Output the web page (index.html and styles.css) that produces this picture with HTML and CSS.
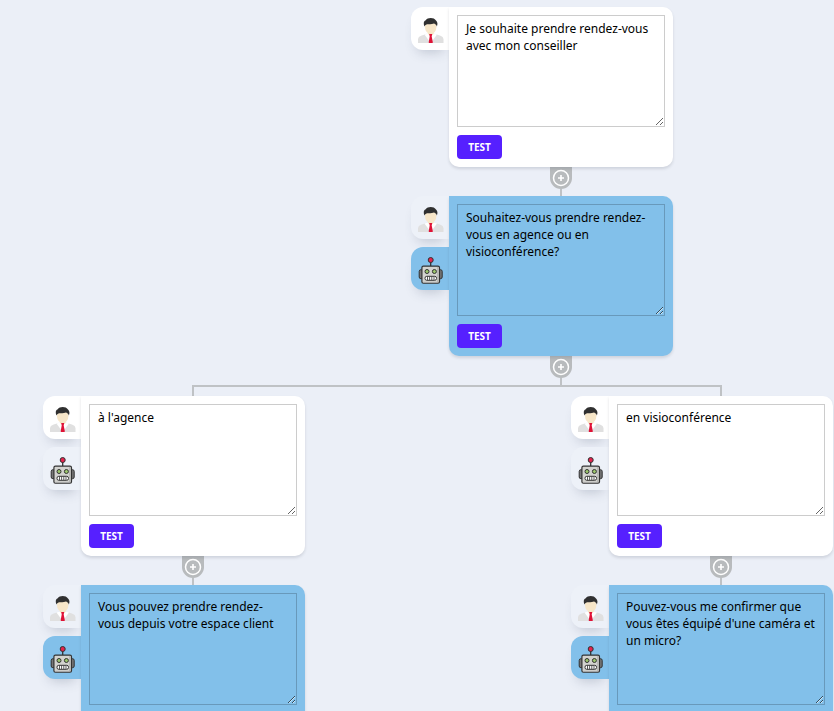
FILE: index.html
```html
<!DOCTYPE html>
<html lang="fr">
<head>
<meta charset="utf-8">
<meta name="viewport" content="width=device-width, initial-scale=1">
<title>Scénario</title>
<link rel="stylesheet" href="styles.css">
</head>
<body>
<svg class="sprite" aria-hidden="true">
  <symbol id="person" viewBox="0 0 26 28">
    <path d="M0 26V22Q0.300 19.500 3 18.700L9 16.800H16.500L22.500 18.700Q25.300 19.500 25.500 22V26Z" fill="#e0e0e0"/>
    <path d="M9 16.800L6.500 17.500L12.700 26L19 17.500L16.500 16.800Z" fill="#fff"/>
    <path d="M10 14H15.500V17L12.700 19L10 17Z" fill="#f3dfba"/>
    <ellipse cx="12.700" cy="10.200" rx="5.700" ry="6.800" fill="#f7e6c8"/>
    <path d="M6.300 9.500C5.200 6 5.800 4 7.700 3.300C9.500 0.300 16 0.200 18 3.500C19.700 5 19.800 7 18.900 9.500C18.500 8 17.500 7 16 6.400C13 7.300 11 7 9 7.200C7.500 7.600 7 8.500 6.300 9.500Z" fill="#303030"/>
    <path d="M11.200 17H14.200L13.700 19.500L14.700 24.500V26H10.800V24.500L11.700 19.500Z" fill="#df1236"/>
  </symbol>
  <symbol id="robot" viewBox="0 0 26 28">
    <path d="M12.700 5V9" stroke="#333" stroke-width="1.300"/>
    <circle cx="12.700" cy="3" r="2.500" fill="#e5234d" stroke="#333" stroke-width="1"/>
    <rect x="1.200" y="12.700" width="3.600" height="9" rx="1.700" fill="#777" stroke="#303030" stroke-width="1"/>
    <rect x="20.600" y="12.700" width="3.600" height="9" rx="1.700" fill="#777" stroke="#303030" stroke-width="1"/>
    <rect x="3.900" y="9.200" width="17.600" height="17" rx="1.500" fill="#d3d3cf" stroke="#333" stroke-width="1.200"/>
    <path d="M19.900 10V25.400H5" stroke="#aaa" stroke-width="1" fill="none"/>
    <circle cx="9" cy="14.500" r="2" fill="#9bc66b" stroke="#333" stroke-width="1"/>
    <circle cx="16.400" cy="14.500" r="2" fill="#9bc66b" stroke="#333" stroke-width="1"/>
    <rect x="7" y="19.300" width="11.500" height="4" rx="1.800" fill="#fff" stroke="#333" stroke-width="1"/>
    <path d="M9.500 19.500V23M11.600 19.500V23M13.800 19.500V23M16 19.500V23" stroke="#333" stroke-width="0.800"/>
  </symbol>
  <symbol id="plus" viewBox="0 0 18 18">
    <circle cx="9" cy="9" r="7.500" fill="none" stroke="#fff" stroke-width="1.500"/>
    <path d="M9 6V12M6 9H12" stroke="#fff" stroke-width="1.600"/>
  </symbol>
</svg>
<main class="tree">
  <div class="trunk">
    <section class="node">
      <div class="tabs">
        <button class="tab active" type="button" aria-label="Client"><svg><use href="#person"/></svg></button>
      </div>
      <div class="card">
        <textarea aria-label="Message">Je souhaite prendre rendez-vous avec mon conseiller</textarea>
        <button class="test" type="button">TEST</button>
      </div>
    </section>
    <div class="link"><button class="add" type="button" aria-label="Ajouter"><svg><use href="#plus"/></svg></button></div>
    <section class="node bot">
      <div class="tabs">
        <button class="tab" type="button" aria-label="Client"><svg><use href="#person"/></svg></button>
        <button class="tab active" type="button" aria-label="Robot"><svg><use href="#robot"/></svg></button>
      </div>
      <div class="card">
        <textarea aria-label="Message">Souhaitez-vous prendre rendez-vous en agence ou en visioconférence?</textarea>
        <button class="test" type="button">TEST</button>
      </div>
    </section>
    <div class="link"><button class="add" type="button" aria-label="Ajouter"><svg><use href="#plus"/></svg></button></div>
  </div>
  <div class="branches">
    <div class="fork"></div>
    <div class="branch">
      <section class="node">
        <div class="tabs">
          <button class="tab active" type="button" aria-label="Client"><svg><use href="#person"/></svg></button>
          <button class="tab" type="button" aria-label="Robot"><svg><use href="#robot"/></svg></button>
        </div>
        <div class="card">
          <textarea aria-label="Message">à l'agence</textarea>
          <button class="test" type="button">TEST</button>
        </div>
      </section>
      <div class="link"><button class="add" type="button" aria-label="Ajouter"><svg><use href="#plus"/></svg></button></div>
      <section class="node bot">
        <div class="tabs">
          <button class="tab" type="button" aria-label="Client"><svg><use href="#person"/></svg></button>
          <button class="tab active" type="button" aria-label="Robot"><svg><use href="#robot"/></svg></button>
        </div>
        <div class="card">
          <textarea aria-label="Message">Vous pouvez prendre rendez-vous depuis votre espace client</textarea>
          <button class="test" type="button">TEST</button>
        </div>
      </section>
    </div>
    <div class="branch">
      <section class="node">
        <div class="tabs">
          <button class="tab active" type="button" aria-label="Client"><svg><use href="#person"/></svg></button>
          <button class="tab" type="button" aria-label="Robot"><svg><use href="#robot"/></svg></button>
        </div>
        <div class="card">
          <textarea aria-label="Message">en visioconférence</textarea>
          <button class="test" type="button">TEST</button>
        </div>
      </section>
      <div class="link"><button class="add" type="button" aria-label="Ajouter"><svg><use href="#plus"/></svg></button></div>
      <section class="node bot">
        <div class="tabs">
          <button class="tab" type="button" aria-label="Client"><svg><use href="#person"/></svg></button>
          <button class="tab active" type="button" aria-label="Robot"><svg><use href="#robot"/></svg></button>
        </div>
        <div class="card">
          <textarea aria-label="Message">Pouvez-vous me confirmer que vous êtes équipé d'une caméra et un micro?</textarea>
          <button class="test" type="button">TEST</button>
        </div>
      </section>
    </div>
  </div>
</main>
</body>
</html>
```
FILE: styles.css
```css
* {
  box-sizing: border-box;
}

html {
  scrollbar-width: none;
}

body {
  margin: 0;
  background: #ebeff7;
  color: #000;
  font-family: "Noto Sans", sans-serif;
  font-size: 12px;
}

button,
textarea {
  margin: 0;
  font-family: inherit;
}

.sprite {
  position: absolute;
  width: 0;
  height: 0;
}

.tree {
  display: flex;
  flex-direction: column;
  padding-top: 7px;
}

.trunk {
  padding-left: 411px;
}

/* Each node is a column of speaker tabs beside its card. */
.node {
  display: flex;
  width: 262px;
}

.tabs {
  display: flex;
  flex-direction: column;
  gap: 8px;
  width: 38px;
}

.tab {
  height: 43px;
  padding: 10px 0 5px 7px;
  border: 0;
  border-radius: 12px 0 0 12px;
  background: #edf1f8;
  box-shadow: 0 8px 12px -6px rgba(60, 70, 100, 0.25);
  text-align: left;
}

.tab svg {
  display: block;
  width: 26px;
  height: 28px;
}

.tab.active {
  background: #fff;
}

.bot .tab.active,
.bot .card {
  background: #82c0ea;
}

.card {
  position: relative;
  display: flex;
  flex-direction: column;
  align-items: flex-start;
  gap: 8px;
  width: 224px;
  padding: 8px;
  border-radius: 0 10px 10px 10px;
  background: #fff;
  box-shadow: 0 2px 3px rgba(60, 70, 90, 0.16);
}

.card textarea {
  width: 208px;
  height: 112px;
  padding: 4px 8px;
  border: 1px solid rgba(0, 0, 0, 0.2);
  background: transparent;
  color: #000;
  font-size: 12px;
  line-height: 17px;
  outline: 0;
  resize: both;
}

.test {
  width: 45px;
  height: 24px;
  padding: 0;
  border: 0;
  border-radius: 4px;
  background: #5620ff;
  color: #fff;
  font-size: 10px;
  font-weight: 700;
}

/* Connector with the add button, centred under the card. */
.link {
  display: flex;
  flex-direction: column;
  align-items: center;
  width: 224px;
  height: 29px;
  margin-left: 38px;
}

.link::after {
  content: "";
  flex: 1;
  width: 2px;
  background: #bfc2c5;
}

.add {
  width: 22px;
  height: 22px;
  padding: 2px;
  border: 0;
  border-radius: 0 0 11px 11px;
  background: #b8bbbd;
}

.add svg {
  display: block;
  width: 18px;
  height: 18px;
}

.branches {
  display: grid;
  grid-template-columns: 262px 262px;
  column-gap: 266px;
  padding-left: 43px;
}

.fork {
  grid-column: 1 / -1;
  height: 11px;
  margin: 0 111px 0 149px;
  border: solid #bfc2c5;
  border-width: 2px 2px 0;
}
```
